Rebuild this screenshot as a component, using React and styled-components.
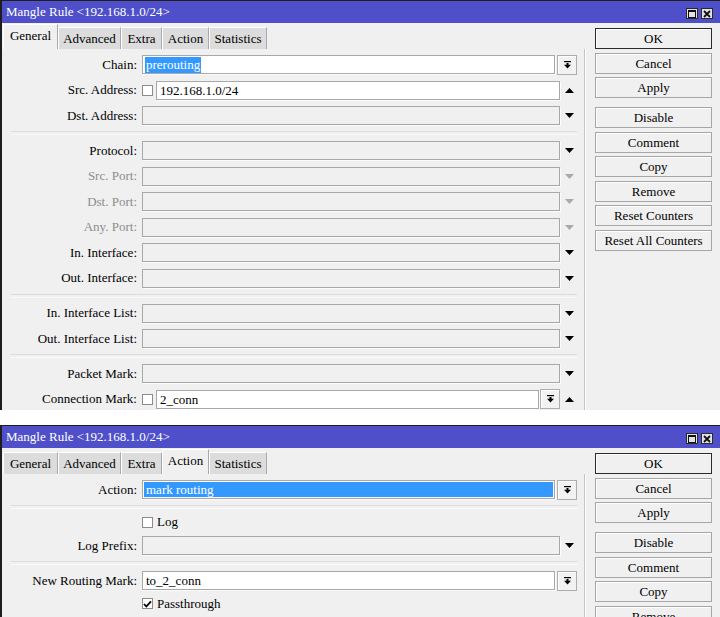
import React from 'react';
import styled, { createGlobalStyle } from 'styled-components';

const Global = createGlobalStyle`
  html, body { margin: 0; padding: 0; background: #fff; }
  body {
    font-family: "Liberation Serif", "Tinos", "DejaVu Serif", "Noto Serif", "Times New Roman", Times, serif;
    font-size: 13px;
    color: #000;
  }
  * { box-sizing: border-box; }
`;

const Page = styled.div`
  width: 720px;
  display: flex;
  flex-direction: column;
  gap: 15px;
  font-family: "Liberation Serif", "Tinos", "DejaVu Serif", serif;
`;

const Window = styled.div`
  height: ${p => p.$h}px;
  overflow: hidden;
  background: #f0f0f0;
  border-left: 2px solid #1e1e1e;
  border-top: 1px solid #1e1e1e;
  display: flex;
  flex-direction: column;
`;

const TitleBar = styled.div`
  height: 22px;
  flex: none;
  background: #4f50c9;
  color: #fff;
  display: flex;
  align-items: center;
  padding: 0 7px 0 4px;
  font-size: 13px;
`;

const TitleText = styled.div`
  flex: 1;
  white-space: nowrap;
`;

const TitleButtons = styled.div`
  display: flex;
  gap: 3px;
  margin-top: 3px;
`;

const TitleButton = styled.div`
  width: 12px;
  height: 11px;
  border: 1px solid #2a2a2a;
  background: #e2e2e2;
  display: flex;
  align-items: center;
  justify-content: center;
`;

const Body = styled.div`
  flex: 1;
  display: flex;
  min-height: 0;
`;

const LeftCol = styled.div`
  width: 583px;
  display: flex;
  flex-direction: column;
`;

const TabBar = styled.div`
  height: 26px;
  flex: none;
  display: flex;
  align-items: flex-end;
  padding-left: 1px;
`;

const Tab = styled.div`
  width: ${p => p.$w}px;
  height: ${p => (p.$active ? 25 : 22)}px;
  background: ${p => (p.$active ? '#f0f0f0' : '#dcdcdc')};
  border-top: 1px solid #fff;
  border-left: 1px solid #fff;
  border-right: 1px solid #a9a9a9;
  display: flex;
  align-items: center;
  justify-content: center;
  padding-bottom: ${p => (p.$active ? 3 : 0)}px;
  white-space: nowrap;
`;

const FormPanel = styled.div`
  flex: 1;
  border-right: 1px solid #c4c4c4;
  box-shadow: 1px 0 0 #fff;
  padding-top: 2.75px;
  display: flex;
  flex-direction: column;
`;

const Row = styled.div`
  height: ${p => (p.$short ? 21 : 25.5)}px;
  flex: none;
  display: grid;
  grid-template-columns: 135px 435px;
  column-gap: 5px;
  align-items: center;
`;

const Label = styled.div`
  text-align: right;
  white-space: nowrap;
  color: ${p => (p.$disabled ? '#8d8d8d' : '#000')};
`;

const Field = styled.div`
  display: flex;
  align-items: center;
  height: 20px;
`;

const Box = styled.div`
  flex: 1;
  height: 19px;
  border: 1px solid #a8a8a8;
  box-shadow: 1px 1px 0 #fcfcfc;
  background: ${p => (p.$white ? '#fff' : '#f0f0f0')};
  padding: ${p => (p.$fill ? '1px' : '0 0 0 3px')};
  line-height: 17px;
  white-space: nowrap;
  overflow: hidden;
`;

const Selected = styled.span`
  display: inline-block;
  background: #3399ff;
  color: #fff;
  line-height: 16px;
  padding: 0 1px;
  margin-left: -1px;
`;

const FillSelected = styled.div`
  height: 100%;
  background: #3399ff;
  color: #fff;
  line-height: 15px;
  padding-left: 2px;
`;

const Check = styled.div`
  width: 11px;
  height: 11px;
  flex: none;
  background: #fff;
  border: 1px solid #8c8c8c;
  margin-right: ${p => (p.$text ? 4 : 3)}px;
  display: flex;
  align-items: center;
  justify-content: center;
`;

const CheckLine = styled.div`
  display: flex;
  align-items: center;
  white-space: nowrap;
`;

const DropButton = styled.div`
  width: 20px;
  height: 20px;
  flex: none;
  margin-left: ${p => p.$gap}px;
  border: 1px solid #adadad;
  background: #f2f2f2;
  box-shadow: inset 1px 1px 0 #fff;
  display: flex;
  align-items: center;
  justify-content: center;
`;

const ArrowCol = styled.div`
  width: 17px;
  flex: none;
  display: flex;
  align-items: center;
  justify-content: center;
  padding-left: 1px;
`;

const Separator = styled.div`
  height: 9.5px;
  flex: none;
  display: flex;
  align-items: center;
  padding: 0 7px 0 9px;
  &::before {
    content: '';
    flex: 1;
    height: 2px;
    border-top: 1px solid #dcdcdc;
    border-bottom: 1px solid #fafafa;
  }
`;

const RightCol = styled.div`
  width: 135px;
  padding: 5px 8px 0 10px;
  display: flex;
  flex-direction: column;
  gap: 8.8px;
`;

const ButtonGroup = styled.div`
  display: flex;
  flex-direction: column;
  gap: 3.6px;
`;

const Button = styled.div`
  height: 21px;
  border: 1px solid ${p => (p.$default ? '#2b2b2b' : '#a6a6a6')};
  box-shadow: inset 1px 1px 0 #fff;
  background: #f0f0f0;
  text-align: center;
  line-height: 19px;
  white-space: nowrap;
`;

const Tri = ({ up, disabled }) => (
  <svg width="9" height="5" viewBox="0 0 9 5">
    <polygon
      points={up ? '0,5 9,5 4.5,0' : '0,0 9,0 4.5,5'}
      fill={disabled ? '#a9a9a9' : '#000'}
    />
  </svg>
);

const DropIcon = () => (
  <svg width="7" height="8" viewBox="0 0 7 8">
    <rect x="0" y="0" width="7" height="1.2" fill="#000" />
    <rect x="2.5" y="2" width="2" height="2" fill="#000" />
    <polygon points="0,3.8 7,3.8 3.5,7.5" fill="#000" />
  </svg>
);

const Tick = () => (
  <svg width="9" height="8" viewBox="0 0 9 8">
    <path d="M1 4 L3.3 6.5 L8 1.3" stroke="#000" strokeWidth="1.8" fill="none" />
  </svg>
);

const TABS = [
  ['General', 55],
  ['Advanced', 63],
  ['Extra', 41],
  ['Action', 47],
  ['Statistics', 58],
];

const Frame = ({ height, activeTab, children }) => (
  <Window $h={height}>
    <TitleBar>
      <TitleText>Mangle Rule &lt;192.168.1.0/24&gt;</TitleText>
      <TitleButtons>
        <TitleButton>
          <svg width="8" height="8" viewBox="0 0 8 8">
            <rect x="0.5" y="0.5" width="7" height="7" fill="none" stroke="#111" strokeWidth="1" />
            <rect x="0" y="0" width="8" height="2" fill="#111" />
          </svg>
        </TitleButton>
        <TitleButton>
          <svg width="8" height="8" viewBox="0 0 8 8">
            <path d="M1 1 L7 7 M7 1 L1 7" stroke="#111" strokeWidth="1.8" />
          </svg>
        </TitleButton>
      </TitleButtons>
    </TitleBar>
    <Body>
      <LeftCol>
        <TabBar>
          {TABS.map(([t, w]) => (
            <Tab key={t} $w={w} $active={t === activeTab}>{t}</Tab>
          ))}
        </TabBar>
        <FormPanel>{children}</FormPanel>
      </LeftCol>
      <RightCol>
        <ButtonGroup>
          <Button $default>OK</Button>
          <Button>Cancel</Button>
          <Button>Apply</Button>
        </ButtonGroup>
        <ButtonGroup>
          <Button>Disable</Button>
          <Button>Comment</Button>
          <Button>Copy</Button>
          <Button>Remove</Button>
          <Button>Reset Counters</Button>
          <Button>Reset All Counters</Button>
        </ButtonGroup>
      </RightCol>
    </Body>
  </Window>
);

const EmptyRow = ({ label, disabled }) => (
  <Row>
    <Label $disabled={disabled}>{label}</Label>
    <Field>
      <Box />
      <ArrowCol><Tri disabled={disabled} /></ArrowCol>
    </Field>
  </Row>
);

export default function App() {
  return (
    <>
      <Global />
      <Page>
        <Frame height={410} activeTab="General">
          <Row>
            <Label>Chain:</Label>
            <Field>
              <Box $white><Selected>prerouting</Selected></Box>
              <DropButton $gap={2}><DropIcon /></DropButton>
            </Field>
          </Row>
          <Row>
            <Label>Src. Address:</Label>
            <Field>
              <Check />
              <Box $white>192.168.1.0/24</Box>
              <ArrowCol><Tri up /></ArrowCol>
            </Field>
          </Row>
          <EmptyRow label="Dst. Address:" />
          <Separator />
          <EmptyRow label="Protocol:" />
          <EmptyRow label="Src. Port:" disabled />
          <EmptyRow label="Dst. Port:" disabled />
          <EmptyRow label="Any. Port:" disabled />
          <EmptyRow label="In. Interface:" />
          <EmptyRow label="Out. Interface:" />
          <Separator />
          <EmptyRow label="In. Interface List:" />
          <EmptyRow label="Out. Interface List:" />
          <Separator />
          <EmptyRow label="Packet Mark:" />
          <Row>
            <Label>Connection Mark:</Label>
            <Field>
              <Check />
              <Box $white>2_conn</Box>
              <DropButton $gap={1}><DropIcon /></DropButton>
              <ArrowCol><Tri up /></ArrowCol>
            </Field>
          </Row>
        </Frame>
        <Frame height={192} activeTab="Action">
          <Row>
            <Label>Action:</Label>
            <Field>
              <Box $white $fill><FillSelected>mark routing</FillSelected></Box>
              <DropButton $gap={2}><DropIcon /></DropButton>
            </Field>
          </Row>
          <Separator />
          <Row $short>
            <span />
            <CheckLine><Check $text />Log</CheckLine>
          </Row>
          <EmptyRow label="Log Prefix:" />
          <Separator />
          <Row>
            <Label>New Routing Mark:</Label>
            <Field>
              <Box $white>to_2_conn</Box>
              <DropButton $gap={2}><DropIcon /></DropButton>
            </Field>
          </Row>
          <Row $short>
            <span />
            <CheckLine><Check $text><Tick /></Check>Passthrough</CheckLine>
          </Row>
        </Frame>
      </Page>
    </>
  );
}
